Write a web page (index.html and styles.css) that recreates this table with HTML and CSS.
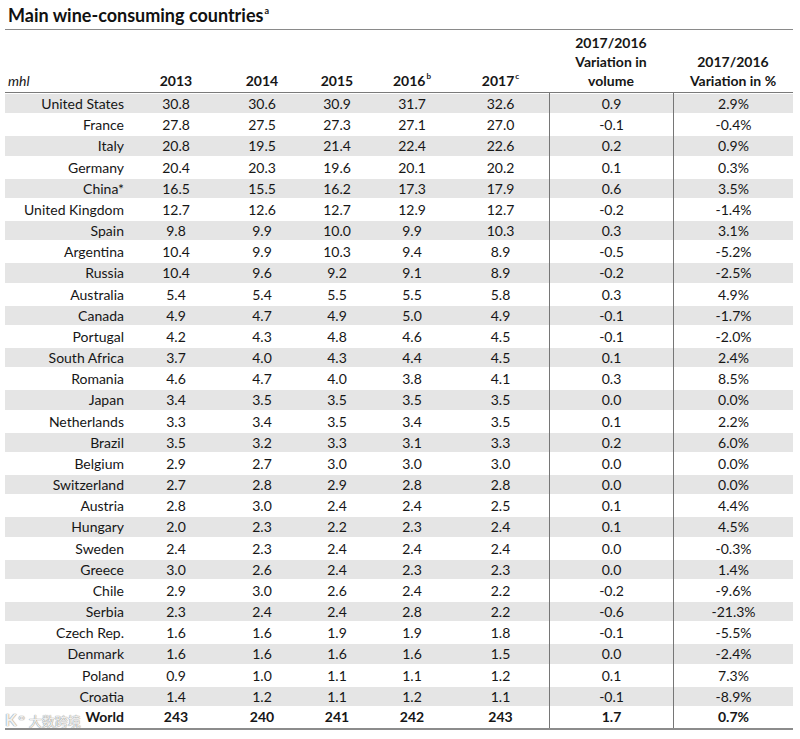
FILE: index.html
```html
<!DOCTYPE html>
<html>
<head>
<meta charset="utf-8">
<link rel="stylesheet" href="styles.css">
</head>
<body>
<div class="page">
  <div class="title">Main wine-consuming countries<sup>a</sup></div>
  <div class="table">
    <div class="row head">
      <div class="c lbl"><i>mhl</i></div>
      <div class="c">2013</div>
      <div class="c">2014</div>
      <div class="c">2015</div>
      <div class="c">2016<sup>b</sup></div>
      <div class="c">2017<sup>c</sup></div>
      <div class="c">2017/2016<br>Variation in<br>volume</div>
      <div class="c">2017/2016<br>Variation in %</div>
    </div>
    <div class="body" id="body"></div>
  </div>
  <div class="wm"><span class="wm-k">K</span><span class="wm-o">&#9901;</span>大数跨境</div>
</div>
<script src="app.js"></script>
</body>
</html>
```
FILE: app.js
```js
const rows = [
["United States","30.8","30.6","30.9","31.7","32.6","0.9","2.9%"],
["France","27.8","27.5","27.3","27.1","27.0","-0.1","-0.4%"],
["Italy","20.8","19.5","21.4","22.4","22.6","0.2","0.9%"],
["Germany","20.4","20.3","19.6","20.1","20.2","0.1","0.3%"],
["China*","16.5","15.5","16.2","17.3","17.9","0.6","3.5%"],
["United Kingdom","12.7","12.6","12.7","12.9","12.7","-0.2","-1.4%"],
["Spain","9.8","9.9","10.0","9.9","10.3","0.3","3.1%"],
["Argentina","10.4","9.9","10.3","9.4","8.9","-0.5","-5.2%"],
["Russia","10.4","9.6","9.2","9.1","8.9","-0.2","-2.5%"],
["Australia","5.4","5.4","5.5","5.5","5.8","0.3","4.9%"],
["Canada","4.9","4.7","4.9","5.0","4.9","-0.1","-1.7%"],
["Portugal","4.2","4.3","4.8","4.6","4.5","-0.1","-2.0%"],
["South Africa","3.7","4.0","4.3","4.4","4.5","0.1","2.4%"],
["Romania","4.6","4.7","4.0","3.8","4.1","0.3","8.5%"],
["Japan","3.4","3.5","3.5","3.5","3.5","0.0","0.0%"],
["Netherlands","3.3","3.4","3.5","3.4","3.5","0.1","2.2%"],
["Brazil","3.5","3.2","3.3","3.1","3.3","0.2","6.0%"],
["Belgium","2.9","2.7","3.0","3.0","3.0","0.0","0.0%"],
["Switzerland","2.7","2.8","2.9","2.8","2.8","0.0","0.0%"],
["Austria","2.8","3.0","2.4","2.4","2.5","0.1","4.4%"],
["Hungary","2.0","2.3","2.2","2.3","2.4","0.1","4.5%"],
["Sweden","2.4","2.3","2.4","2.4","2.4","0.0","-0.3%"],
["Greece","3.0","2.6","2.4","2.3","2.3","0.0","1.4%"],
["Chile","2.9","3.0","2.6","2.4","2.2","-0.2","-9.6%"],
["Serbia","2.3","2.4","2.4","2.8","2.2","-0.6","-21.3%"],
["Czech Rep.","1.6","1.6","1.9","1.9","1.8","-0.1","-5.5%"],
["Denmark","1.6","1.6","1.6","1.6","1.5","0.0","-2.4%"],
["Poland","0.9","1.0","1.1","1.1","1.2","0.1","7.3%"],
["Croatia","1.4","1.2","1.1","1.2","1.1","-0.1","-8.9%"],
["World","243","240","241","242","243","1.7","0.7%"]
];
const body = document.getElementById("body");
rows.forEach((r, i) => {
  const row = document.createElement("div");
  row.className = "row data" + (i % 2 === 0 && i < 29 ? " shade" : "") + (i === 29 ? " total" : "");
  r.forEach((v, j) => {
    const c = document.createElement("div");
    c.className = "c" + (j === 0 ? " lbl" : "") + (j >= 6 ? " vl" : "");
    c.textContent = v;
    row.appendChild(c);
  });
  body.appendChild(row);
});
```
FILE: styles.css
```css
html, body {
  margin: 0;
  padding: 0;
  background: #fff;
}
body {
  font-family: Lato, "Open Sans", sans-serif;
  color: #161616;
  width: 800px;
  height: 739px;
  overflow: hidden;
}
.page {
  position: relative;
  padding-left: 5px;
  width: 788px;
}
.title {
  height: 29px;
  border-bottom: 1px solid #8a8a8a;
  font-weight: 700;
  font-size: 18px;
  line-height: 30px;
  padding-left: 3px;
  color: #111;
}
.title sup {
  font-size: 9px;
  vertical-align: 8px;
  line-height: 0;
  margin-left: 1px;
}
.row {
  display: grid;
  grid-template-columns: 125px 92px 80px 70px 80px 97px 124px 120px;
  font-size: 14px;
}
.head {
  border-bottom: 1px solid #7a7a7a;
  align-items: end;
  font-weight: 700;
  line-height: 19px;
  padding-bottom: 2px;
  box-sizing: border-box;
  height: 63px;
}
.head .c {
  text-align: center;
}
.head .lbl {
  text-align: left;
  padding-left: 3px;
  font-weight: 400;
}
.head sup {
  font-size: 8px;
  line-height: 0;
  vertical-align: 7px;
  margin-left: 1px;
}
.data {
  height: 21.18px;
  line-height: 21px;
}
.data .c {
  text-align: center;
  white-space: nowrap;
}
.data .lbl {
  text-align: right;
  padding-right: 6px;
}
.data .vl {
  border-left: 1px solid #767676;
}
.shade {
  background: linear-gradient(#e5e5e5, #e5e5e5) 0 1px / 100% calc(100% - 2px) no-repeat;
}
.total {
  font-weight: 700;
  height: 21px;
  border-bottom: 2px solid #8c8c8c;
  line-height: 20px;
}
.wm {
  position: absolute;
  left: 5px;
  top: 707px;
  font-family: "Noto Sans CJK SC", sans-serif;
  font-size: 13px;
  line-height: 20px;
  color: rgba(255, 255, 255, 0.9);
  text-shadow: 0 0 1px #8a8a8a, 0 0 1px #8a8a8a;
  pointer-events: none;
}
.wm-k {
  font-family: Lato, sans-serif;
  font-weight: 700;
  font-size: 17px;
}
.wm-o {
  font-size: 11px;
  vertical-align: 4px;
  margin-right: 3px;
}
```
